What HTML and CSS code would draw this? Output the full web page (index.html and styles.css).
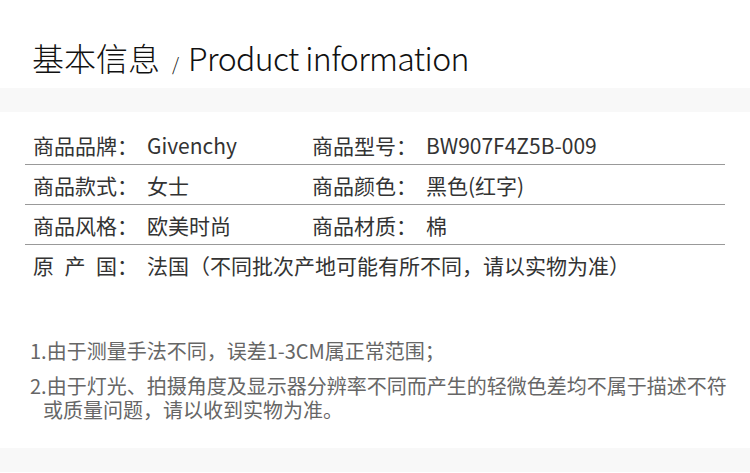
FILE: index.html
```html
<!DOCTYPE html>
<html lang="zh-CN">
<head>
  <meta charset="UTF-8" />
  <meta name="viewport" content="width=device-width, initial-scale=1.0" />
  <title>基本信息</title>
  <link rel="stylesheet" href="styles.css">
</head>
<body>
  <div class="page-head">
    <h1 class="title">基本信息<span class="slash">/</span><span class="en">Product information</span></h1>
  </div>
  <div class="band"></div>

  <div class="specs">
    <div class="spec-row">
      <div class="cell"><span class="label">商品品牌：</span><span class="value">Givenchy</span></div>
      <div class="cell"><span class="label">商品型号：</span><span class="value">BW907F4Z5B-009</span></div>
    </div>
    <div class="spec-row">
      <div class="cell"><span class="label">商品款式：</span><span class="value">女士</span></div>
      <div class="cell"><span class="label">商品颜色：</span><span class="value">黑色(红字)</span></div>
    </div>
    <div class="spec-row">
      <div class="cell"><span class="label">商品风格：</span><span class="value">欧美时尚</span></div>
      <div class="cell"><span class="label">商品材质：</span><span class="value">棉</span></div>
    </div>
    <div class="spec-row">
      <div class="cell wide"><span class="label">原&ensp;产&ensp;国：</span><span class="value">法国（不同批次产地可能有所不同，请以实物为准）</span></div>
    </div>
  </div>

  <div class="notes">
    <p>1.由于测量手法不同，误差1-3CM属正常范围；</p>
    <p>2.由于灯光、拍摄角度及显示器分辨率不同而产生的轻微色差均不属于描述不符或质量问题，请以收到实物为准。</p>
  </div>
  <div class="band"></div>
</body>
</html>
```

FILE: styles.css
```css
body {
  margin: 0;
  background: #fff;
  font-family: "Noto Sans CJK SC", "Noto Sans", sans-serif;
  color: #333;
}

.page-head {
  height: 88px;
  box-sizing: border-box;
  padding: 35px 0 0 32px;
}

.title {
  margin: 0;
  font-size: 32px;
  font-weight: 300;
  line-height: 44px;
  color: #111;
}

.title .slash {
  font-size: 18px;
  margin: 0 9px 0 12px;
}

.title .en {
  letter-spacing: -0.6px;
}

.band {
  height: 24px;
  background: #f8f8f8;
}

.specs {
  margin: 13px 25px 0;
}

.spec-row {
  display: flex;
  height: 39px;
  align-items: center;
  padding-left: 8px;
  border-bottom: 1px solid #999;
  font-size: 21px;
}

.spec-row:last-child {
  border-bottom: none;
}

.cell {
  width: 279px;
  display: flex;
  white-space: nowrap;
}

.cell.wide {
  width: auto;
}

.label {
  width: 114px;
  flex-shrink: 0;
}

.notes {
  padding: 55px 18px 0 30px;
  height: 109px;
  font-size: 20px;
  color: #666;
}

.notes p {
  margin: 0 0 11px;
  line-height: 24px;
  padding-left: 13px;
  text-indent: -13px;
}
```
